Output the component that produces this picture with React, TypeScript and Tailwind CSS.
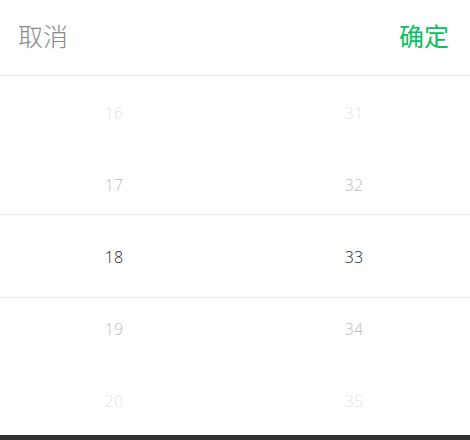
import React from "react";

const left = [
  { v: "16", c: "text-[#e3e3e3]" },
  { v: "17", c: "text-[#bdbdbd]" },
  { v: "18", c: "text-[#222222]" },
  { v: "19", c: "text-[#bdbdbd]" },
  { v: "20", c: "text-[#e3e3e3]" },
];
const right = [
  { v: "31", c: "text-[#e3e3e3]" },
  { v: "32", c: "text-[#bdbdbd]" },
  { v: "33", c: "text-[#222222]" },
  { v: "34", c: "text-[#bdbdbd]" },
  { v: "35", c: "text-[#e3e3e3]" },
];

export default function App() {
  return (
    <div className="w-[470px] h-[440px] bg-white flex flex-col overflow-hidden" style={{ fontFamily: '"Open Sans", "Noto Sans CJK SC", sans-serif' }}>
      <div className="h-[76px] shrink-0 flex items-center justify-between pl-[18px] pr-[21px] pb-[4px] border-b border-[#ececec]">
        <span className="text-[25px] text-[#888888] font-light" style={{ fontFamily: '"Noto Sans CJK SC", sans-serif' }}>取消</span>
        <span className="text-[25px] text-[#07c160] font-normal" style={{ fontFamily: '"Noto Sans CJK SC", sans-serif' }}>确定</span>
      </div>
      <div className="relative h-[359px] shrink-0 grid grid-cols-[228px_1fr]">
        <div className="flex flex-col pt-[1px]">
          {left.map((r) => (
            <div key={r.v} className={`h-[72px] shrink-0 flex items-center justify-center text-[16px] font-light ${r.c}`}>{r.v}</div>
          ))}
        </div>
        <div className="flex flex-col pl-[10px] pt-[1px]">
          {right.map((r) => (
            <div key={r.v} className={`h-[72px] shrink-0 flex items-center justify-center text-[16px] font-light ${r.c}`}>{r.v}</div>
          ))}
        </div>
        <div className="absolute left-0 right-0 top-[138px] h-[84px] border-y border-[#ececec] pointer-events-none" />
      </div>
      <div className="flex-1 bg-[#333333]" />
    </div>
  );
}
